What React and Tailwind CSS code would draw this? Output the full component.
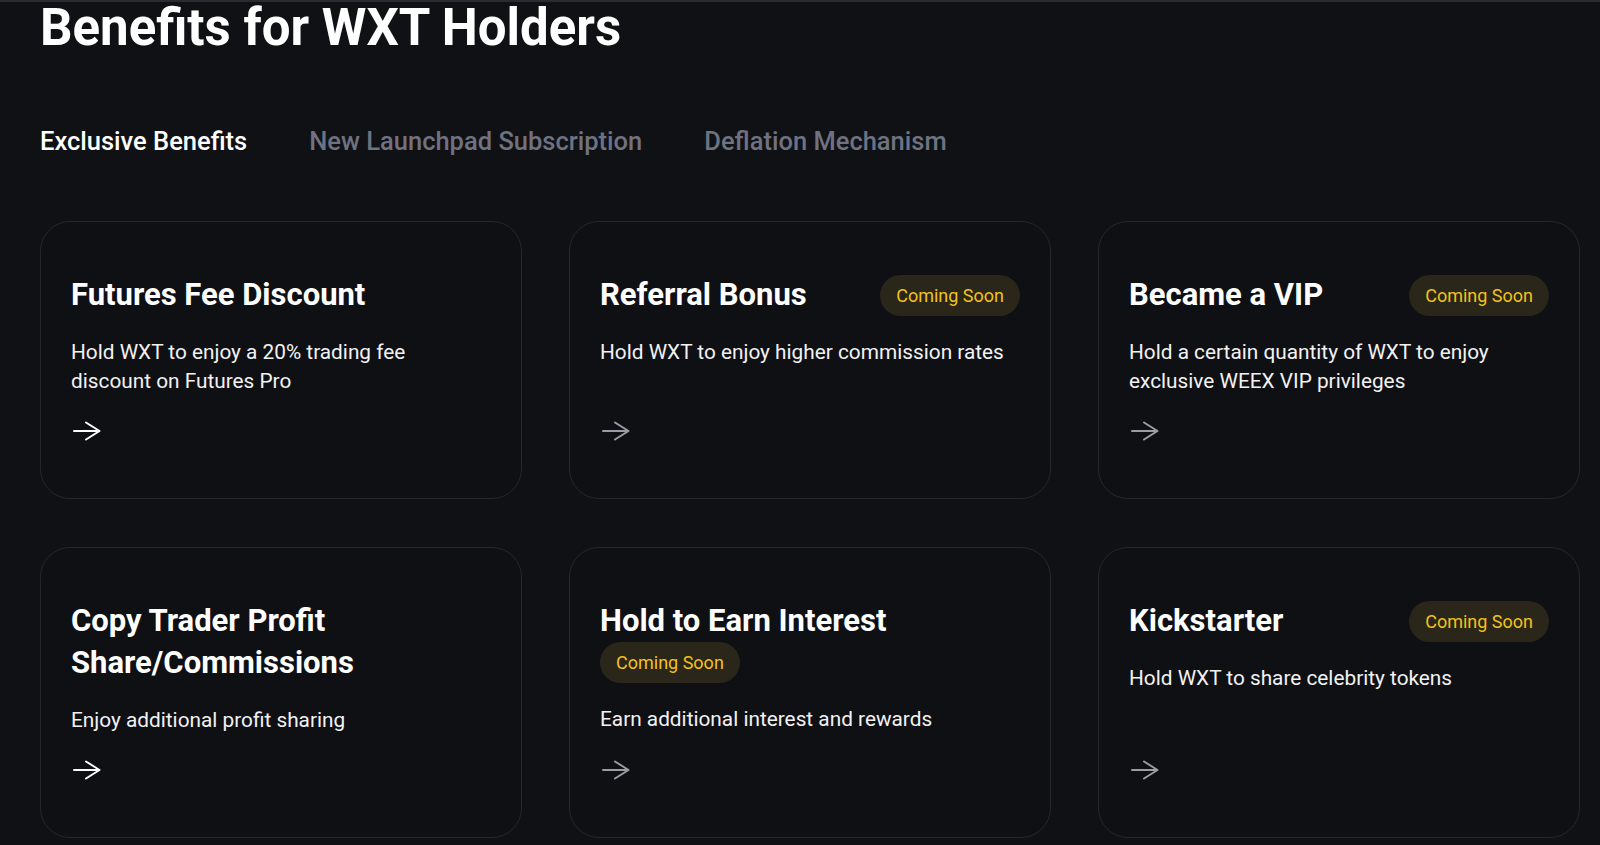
import React from 'react';

const benefits = [
  {
    title: 'Futures Fee Discount',
    desc: 'Hold WXT to enjoy a 20% trading fee discount on Futures Pro',
    soon: false,
  },
  {
    title: 'Referral Bonus',
    desc: 'Hold WXT to enjoy higher commission rates',
    soon: true,
  },
  {
    title: 'Became a VIP',
    desc: 'Hold a certain quantity of WXT to enjoy exclusive WEEX VIP privileges',
    soon: true,
  },
  {
    title: 'Copy Trader Profit Share/Commissions',
    desc: 'Enjoy additional profit sharing',
    soon: false,
  },
  {
    title: 'Hold to Earn Interest',
    desc: 'Earn additional interest and rewards',
    soon: true,
  },
  {
    title: 'Kickstarter',
    desc: 'Hold WXT to share celebrity tokens',
    soon: true,
  },
];

const tabs = ['Exclusive Benefits', 'New Launchpad Subscription', 'Deflation Mechanism'];

const Arrow = ({ active }) => (
  <svg
    width="30"
    height="20"
    viewBox="0 0 30 20"
    fill="none"
    className={active ? 'text-white' : 'text-[#9b9da6]'}
  >
    <path
      d="M3 10H28.5M15 1.5L28.5 10L15 18.5"
      stroke="currentColor"
      strokeWidth="2"
      strokeLinecap="round"
      strokeLinejoin="round"
    />
  </svg>
);

const BenefitCard = ({ item }) => (
  <div className="flex flex-col rounded-[30px] border border-[#26272c] bg-[#0f1014] px-[30px] pt-[52px] pb-[57px]">
    {/* title + badge */}
    <div className="flex flex-wrap items-center justify-between gap-x-4">
      <h3 className="text-[31px] leading-[42px] font-bold text-white">{item.title}</h3>
      {item.soon && (
        <span className="inline-flex h-[41px] items-center rounded-full bg-[#2a2619] px-4 text-[18px] text-[#f2c21b]">
          Coming Soon
        </span>
      )}
    </div>
    <p className="mt-[22px] max-w-[412px] text-[20.8px] leading-[29px] text-[#f2f2f3]">{item.desc}</p>
    <div className="mt-auto pt-[25px]">
      <Arrow active={!item.soon} />
    </div>
  </div>
);

const App = () => {
  return (
    <div
      className="min-h-screen border-t-2 border-[#2a2b30] bg-[#101115] pl-10 pr-5"
      style={{ fontFamily: 'Roboto, "Noto Sans", sans-serif' }}
    >
      <h1 className="text-[51px] leading-none font-bold text-white">Benefits for WXT Holders</h1>

      {/* Tabs */}
      <div className="mt-[73px] flex gap-[62px]">
        {tabs.map((t, i) => (
          <button
            key={t}
            className={`text-[25.5px] leading-[30px] font-medium ${i === 0 ? 'text-white' : 'text-[#6f7281]'}`}
          >
            {t}
          </button>
        ))}
      </div>

      {/* Cards */}
      <div className="mt-[65px] grid grid-cols-3 gap-x-[47px] gap-y-[48px]">
        {benefits.map((b) => (
          <BenefitCard key={b.title} item={b} />
        ))}
      </div>
    </div>
  );
};

export default App;
